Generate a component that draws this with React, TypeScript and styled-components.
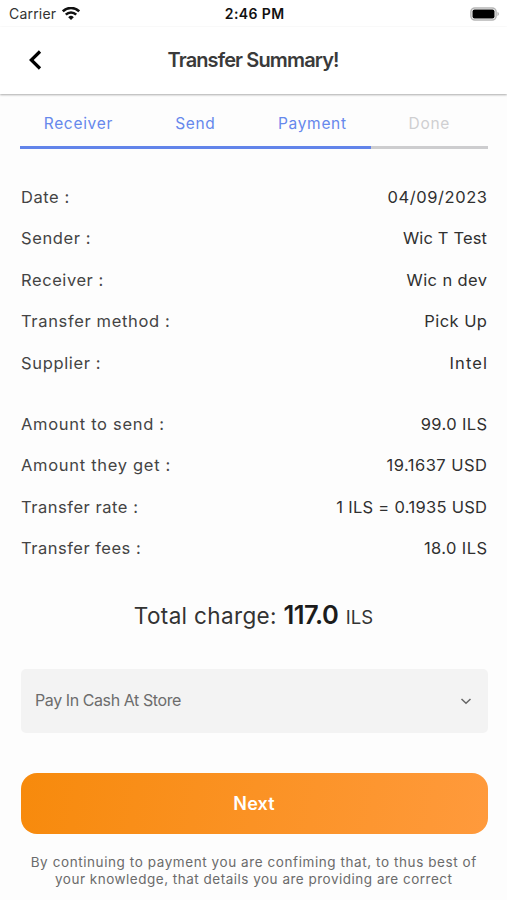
import React from 'react';
import styled, { createGlobalStyle } from 'styled-components';

const GlobalStyle = createGlobalStyle`
  * { box-sizing: border-box; }
  body { margin: 0; background: #fdfdfd; }
`;
const Screen = styled.div`
  width: 507px;
  height: 900px;
  display: flex;
  flex-direction: column;
  overflow: hidden;
  background: #fdfdfd;
  color: #444;
  font-family: Inter, sans-serif;
`;
const Line = styled.span<{ $size: number; $weight?: number; $spacing?: number; $color?: string }>`
  font-size: ${p => p.$size}px;
  font-weight: ${p => p.$weight ?? 400};
  letter-spacing: ${p => p.$spacing ?? 0}px;
  margin-right: ${p => -(p.$spacing ?? 0)}px;
  color: ${p => p.$color ?? 'inherit'};
  white-space: nowrap;
`;
const StatusBar = styled.div`
  height: 27px;
  flex: none;
  display: grid;
  grid-template-columns: 1fr auto 1fr;
  align-items: center;
  padding: 0 7px 0 9px;
  background: #fff;
`;
const Carrier = styled.div`
  display: flex;
  align-items: center;
  gap: 6px;
`;
const BatterySlot = styled.div`
  display: flex;
  justify-content: flex-end;
`;
const Header = styled.header`
  height: 67px;
  flex: none;
  padding-bottom: 2px;
  display: grid;
  grid-template-columns: 70px 1fr 70px;
  align-items: center;
  justify-items: center;
  background: #fff;
  box-shadow: 0 1px 2px rgba(0, 0, 0, 0.32);
`;
const Steps = styled.nav`
  height: 55px;
  flex: none;
  margin: 0 19px 0 20px;
  display: grid;
  grid-template-columns: repeat(4, 1fr);
`;
const Step = styled.div<{ $active: boolean }>`
  display: flex;
  align-items: center;
  justify-content: center;
  padding: 7px 1px 0 0;
  color: ${p => (p.$active ? '#6688ec' : '#cfcfd1')};
  border-bottom: 3px solid ${p => (p.$active ? '#6284ea' : '#cdcdcf')};
`;
const Rows = styled.section<{ $top: number }>`
  margin: ${p => p.$top}px 20px 0 21px;
`;
const Row = styled.div`
  height: 41.5px;
  display: flex;
  align-items: center;
  justify-content: space-between;
`;
const Total = styled.div`
  height: 60px;
  flex: none;
  margin-top: 30px;
  display: flex;
  align-items: baseline;
  justify-content: center;
  gap: 7px;
`;
const Select = styled.button`
  height: 64px;
  flex: none;
  margin: 10px 19px 0 21px;
  padding: 0 15px 3px 14px;
  border: 0;
  border-radius: 5px;
  background: #f3f3f3;
  display: flex;
  align-items: center;
  justify-content: space-between;
  font-family: inherit;
`;
const NextButton = styled.button`
  height: 61px;
  flex: none;
  margin: 39.5px 19.5px 0 20.5px;
  padding-top: 2px;
  border: 0;
  border-radius: 16px;
  background: linear-gradient(100deg, #f78a0c, #ff9a3c);
  font-family: inherit;
`;
const Note = styled.p`
  margin: 20px 0 0;
  display: flex;
  flex-direction: column;
  align-items: center;
  line-height: 17px;
  color: #6b6b6b;
`;

type Entry = { label: string; value: string; labelSpacing: number; valueSpacing: number };

const details: Entry[] = [
  { label: 'Date :', value: '04/09/2023', labelSpacing: 0.55, valueSpacing: 0.58 },
  { label: 'Sender :', value: 'Wic T Test', labelSpacing: 0.6, valueSpacing: 0.15 },
  { label: 'Receiver :', value: 'Wic n dev', labelSpacing: 0.57, valueSpacing: 0.38 },
  { label: 'Transfer method :', value: 'Pick Up', labelSpacing: 0.65, valueSpacing: 0.45 },
  { label: 'Supplier :', value: 'Intel', labelSpacing: 0.65, valueSpacing: 1.1 },
];
const amounts: Entry[] = [
  { label: 'Amount to send :', value: '99.0 ILS', labelSpacing: 0.7, valueSpacing: 0.35 },
  { label: 'Amount they get :', value: '19.1637 USD', labelSpacing: 0.7, valueSpacing: 0.48 },
  { label: 'Transfer rate :', value: '1 ILS = 0.1935 USD', labelSpacing: 0.53, valueSpacing: 0.29 },
  { label: 'Transfer fees :', value: '18.0 ILS', labelSpacing: 0.5, valueSpacing: 0.4 },
];

const renderRows = (rows: Entry[]) => rows.map(r => (
  <Row key={r.label}>
    <Line $size={16.5} $spacing={r.labelSpacing}>{r.label}</Line>
    <Line $size={16.5} $spacing={r.valueSpacing} $color="#303030">{r.value}</Line>
  </Row>
));

export default function App() {
  return (
    <Screen>
      <GlobalStyle />
      <StatusBar>
        <Carrier>
          <Line $size={14} $spacing={0.2} $color="#333">Carrier</Line>
          <svg width="18" height="14" viewBox="0 0 18 14" fill="none" stroke="#111" strokeWidth="2.5">
            <path d="M.8 4.300a11.700 11.700 0 0 1 16.400 0M3.800 7.700a7.300 7.300 0 0 1 10.400 0" />
            <path d="M6.200 10.200a4 4 0 0 1 5.600 0L9 13.100z" fill="#111" stroke="none" />
          </svg>
        </Carrier>
        <Line $size={14} $weight={600} $spacing={0.4} $color="#111">2:46 PM</Line>
        <BatterySlot>
          <svg width="30" height="14" viewBox="0 0 30 14">
            <rect x=".9" y=".9" width="25.200" height="12.200" rx="4" fill="none" stroke="#b5b5b5" strokeWidth="1.500" />
            <rect x="2.500" y="2.500" width="22" height="9" rx="2" fill="#000" />
            <path d="M27.500 4.800q2.800 2.200 0 4.400z" fill="#aaa" />
          </svg>
        </BatterySlot>
      </StatusBar>
      <Header>
        <svg width="14" height="20" viewBox="0 0 14 20" fill="none" stroke="#000" strokeWidth="3.200">
          <path d="M12 1.500L3.300 10l8.700 8.500" />
        </svg>
        <Line $size={20} $weight={600} $spacing={-0.87} $color="#3a3a3a">Transfer Summary!</Line>
      </Header>
      <Steps>
        {['Receiver', 'Send', 'Payment', 'Done'].map(s => (
          <Step key={s} $active={s !== 'Done'}><Line $size={15.5} $spacing={0.7}>{s}</Line></Step>
        ))}
      </Steps>
      <Rows $top={27}>{renderRows(details)}</Rows>
      <Rows $top={19.5}>{renderRows(amounts)}</Rows>
      <Total>
        <Line $size={22.5} $spacing={0.35} $color="#333">Total charge:</Line>
        <Line $size={25.5} $weight={600} $spacing={-0.5} $color="#1c1c1c">117.0</Line>
        <Line $size={18.5} $color="#333">ILS</Line>
      </Total>
      <Select>
        <Line $size={16} $spacing={-0.42} $color="#6c6c6c">Pay In Cash At Store</Line>
        <svg width="14" height="10" viewBox="0 0 14 10" fill="none" stroke="#666" strokeWidth="1.500">
          <path d="M2.500 4L7 8.200 11.500 4" />
        </svg>
      </Select>
      <NextButton><Line $size={18} $weight={600} $spacing={0.15} $color="#fff">Next</Line></NextButton>
      <Note>
        <Line $size={13.5} $spacing={0.58}>By continuing to payment you are confiming that, to thus best of</Line>
        <Line $size={13.5} $spacing={0.5}>your knowledge, that details you are providing are correct</Line>
      </Note>
    </Screen>
  );
}
